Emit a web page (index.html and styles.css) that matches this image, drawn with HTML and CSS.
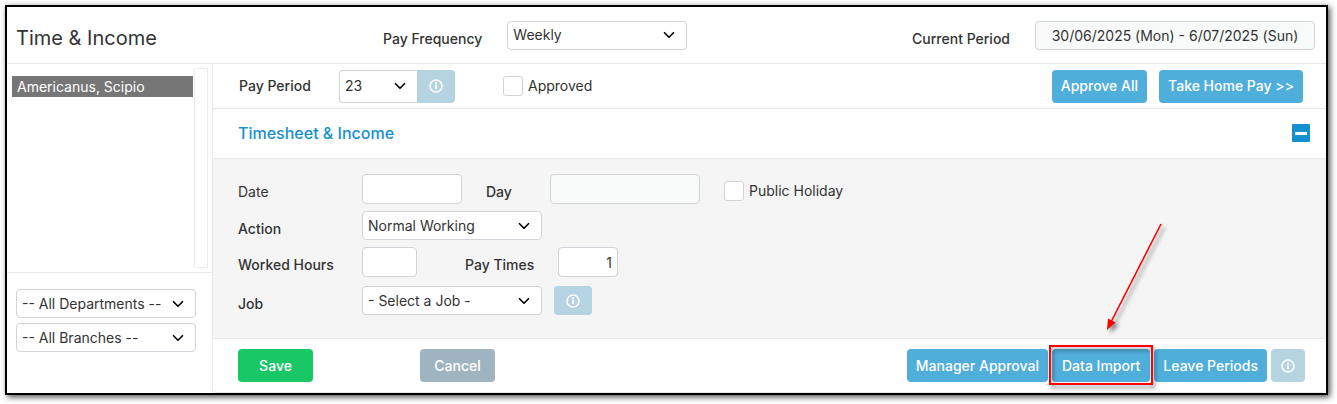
FILE: index.html
```html
<!DOCTYPE html>
<html lang="en">
<head>
    <meta charset="UTF-8">
    <meta name="viewport" content="width=device-width, initial-scale=1.0">
    <title>Time &amp; Income</title>
    <link rel="stylesheet" href="styles.css">
</head>
<body>
    <svg class="sprite" aria-hidden="true">
        <symbol id="info" viewBox="0 0 14 14">
            <circle cx="7" cy="7" r="6" fill="none" stroke="currentColor" stroke-width="1.5"/>
            <path d="M7 6v4M7 3.6v1.6" fill="none" stroke="currentColor" stroke-width="2"/>
        </symbol>
    </svg>
    <div class="frame">
        <header class="header">
            <h1>Time &amp; Income</h1>
            <div class="header-field">
                <label for="frequency">Pay Frequency</label>
                <select id="frequency" class="select">
                    <option>Weekly</option>
                </select>
            </div>
            <div class="header-field header-right">
                <label for="current">Current Period</label>
                <input type="text" id="current" class="input input-period" value="30/06/2025 (Mon) - 6/07/2025 (Sun)" readonly>
            </div>
        </header>
        <div class="body">
            <aside class="sidebar">
                <div class="people">
                    <ul>
                        <li><button type="button" class="person">Americanus, Scipio</button></li>
                    </ul>
                    <div class="track"></div>
                </div>
                <div class="filters">
                    <select class="select" aria-label="Department">
                        <option>-- All Departments --</option>
                    </select>
                    <select class="select" aria-label="Branch">
                        <option>-- All Branches --</option>
                    </select>
                </div>
            </aside>
            <main class="main">
                <div class="toolbar">
                    <label for="period" class="period-label">Pay Period</label>
                    <div class="period-group">
                        <select id="period" class="select">
                            <option>23</option>
                        </select>
                        <button type="button" class="btn btn-info" aria-label="Pay period info"><svg><use href="#info"/></svg></button>
                    </div>
                    <label class="check"><input type="checkbox">Approved</label>
                    <div class="toolbar-actions">
                        <button type="button" class="btn">Approve All</button>
                        <button type="button" class="btn">Take Home Pay &gt;&gt;</button>
                    </div>
                </div>
                <div class="section-title">
                    <h2>Timesheet &amp; Income</h2>
                    <button type="button" class="collapse" aria-label="Collapse"></button>
                </div>
                <form class="form">
                    <div class="row">
                        <label for="date" class="light">Date</label>
                        <input type="text" id="date" class="input input-date">
                        <label for="day" class="label-day">Day</label>
                        <input type="text" id="day" class="input input-day" readonly>
                        <label class="check"><input type="checkbox">Public Holiday</label>
                    </div>
                    <div class="row">
                        <label for="action">Action</label>
                        <select id="action" class="select">
                            <option>Normal Working</option>
                        </select>
                    </div>
                    <div class="row">
                        <label for="hours">Worked Hours</label>
                        <input type="text" id="hours" class="input input-hours">
                        <label for="times" class="label-times">Pay Times</label>
                        <input type="text" id="times" class="input input-times" value="1">
                    </div>
                    <div class="row row-job">
                        <label for="job">Job</label>
                        <select id="job" class="select">
                            <option>- Select a Job -</option>
                        </select>
                        <button type="button" class="btn btn-info" aria-label="Job info"><svg><use href="#info"/></svg></button>
                    </div>
                </form>
                <div class="footer">
                    <button type="button" class="btn btn-save">Save</button>
                    <button type="button" class="btn btn-cancel">Cancel</button>
                    <div class="footer-actions">
                        <button type="button" class="btn">Manager Approval</button>
                        <div class="marked">
                            <button type="button" class="btn">Data Import</button>
                            <span class="marker"></span>
                            <svg class="arrow" viewBox="0 0 64 112" aria-hidden="true">
                                <path d="M56 2L6 100" stroke="#f00" stroke-width="1.6"/>
                                <path d="M2 108L3 96.500L10.500 100.500Z" fill="#f00"/>
                            </svg>
                        </div>
                        <button type="button" class="btn">Leave Periods</button>
                        <button type="button" class="btn btn-info" aria-label="Info"><svg><use href="#info"/></svg></button>
                    </div>
                </div>
            </main>
        </div>
    </div>
</body>
</html>
```
FILE: styles.css
```css
* {
    box-sizing: border-box;
}
body {
    font-family: Inter, "Liberation Sans", sans-serif;
    font-size: 14px;
    line-height: 20px;
    color: #333;
    background-color: #fff;
    margin: 0;
    padding: 5px 9px 9px 5px;
}
h1, h2, ul {
    margin: 0;
    padding: 0;
}
ul {
    list-style: none;
}
label {
    font-weight: 500;
}
button, input, select {
    font: inherit;
    color: inherit;
    margin: 0;
}
.sprite {
    display: none;
}
.frame {
    border: 2px solid #000;
    box-shadow: 2px 2px 6px rgba(0, 0, 0, 0.7);
    background-color: #fff;
}

/* controls */
.input, .select {
    border: 1px solid #ced4da;
    border-radius: 4px;
    background-color: #fff;
    padding: 0 5px;
    outline: none;
}
.input {
    height: 30px;
}
.input:read-only {
    background-color: #f8faf9;
}
.select {
    appearance: none;
    width: 180px;
    height: 29px;
    background-image: url("data:image/svg+xml,%3Csvg xmlns='http://www.w3.org/2000/svg' viewBox='0 0 16 16'%3E%3Cpath fill='none' stroke='%23000' stroke-linecap='round' stroke-linejoin='round' stroke-width='2.2' d='m2 5 6 6 6-6'/%3E%3C/svg%3E");
    background-repeat: no-repeat;
    background-position: right 11px center;
    background-size: 12px 12px;
}
.btn {
    height: 33px;
    padding: 0 9px;
    border: none;
    border-radius: 4px;
    background-color: #50aedb;
    color: #fff;
    font-weight: 500;
    white-space: nowrap;
    cursor: pointer;
}
.btn-info {
    display: flex;
    align-items: center;
    justify-content: center;
    width: 38px;
    background-color: #b5d3e0;
}
.btn-info svg {
    width: 14px;
    height: 14px;
}
.check {
    display: flex;
    align-items: center;
    gap: 5px;
    font-weight: 400;
}
.check input {
    appearance: none;
    width: 20px;
    height: 20px;
    border: 1px solid #ced4da;
    border-radius: 3px;
    background-color: #fff;
}

/* header */
.header {
    display: flex;
    align-items: center;
    height: 57px;
    padding: 0 11px 0 9px;
    border-bottom: 1px solid #e8e8e8;
}
.header h1 {
    width: 367px;
    padding-top: 5px;
    font-size: 20px;
    font-weight: 400;
}
.header-field {
    display: flex;
    align-items: center;
    gap: 25px;
}
.header-field label {
    padding-top: 8px;
}
.header-right {
    margin-left: auto;
}
.input-period {
    width: 280px;
    height: 29px;
    text-align: center;
}

/* sidebar */
.body {
    display: flex;
}
.sidebar {
    width: 206px;
    border-right: 1px solid #e8e8e8;
}
.people {
    display: flex;
    height: 209px;
    padding: 4px 4px 4px 5px;
    border-bottom: 1px solid #e8e8e8;
}
.people ul {
    flex: 1;
    padding-top: 8px;
}
.person {
    display: block;
    width: 100%;
    height: 21px;
    padding: 0 5px;
    border: none;
    background-color: #767676;
    color: #fff;
    text-align: left;
}
.track {
    width: 14px;
    margin-left: 1px;
    border: 1px solid #ececec;
}
.filters {
    display: flex;
    flex-direction: column;
    gap: 5px;
    padding: 16px 9px;
}

/* main */
.main {
    flex: 1;
}
.toolbar {
    display: flex;
    align-items: center;
    height: 45px;
    padding: 0 23px 0 26px;
    border-bottom: 1px solid #e8e8e8;
}
.period-label {
    width: 100px;
}
.period-group {
    display: flex;
    margin-right: 48px;
}
.period-group .select {
    width: 78px;
    height: 33px;
    border-right: none;
    border-radius: 4px 0 0 4px;
}
.period-group .btn-info {
    border-radius: 0 4px 4px 0;
}
.toolbar-actions {
    display: flex;
    gap: 12px;
    margin-left: auto;
}
.section-title {
    display: flex;
    align-items: center;
    justify-content: space-between;
    height: 50px;
    padding: 0 16px 1px 25px;
    border-bottom: 1px solid #e8e8e8;
}
.section-title h2 {
    font-size: 16px;
    font-weight: 500;
    color: #1690cd;
}
.collapse {
    display: flex;
    align-items: center;
    justify-content: center;
    width: 18px;
    height: 18px;
    padding: 0;
    border: none;
    border-radius: 1px;
    background-color: #1690cd;
}
.collapse::before {
    content: "";
    width: 12px;
    height: 3px;
    background-color: #fff;
}
.form {
    display: flex;
    flex-direction: column;
    gap: 7px;
    padding: 15px 25px 23px;
    background-color: #f5f5f5;
    border-bottom: 1px solid #e8e8e8;
}
.row {
    display: flex;
    align-items: center;
}
.row > label:first-child {
    width: 124px;
}
.row > label:not(.check) {
    padding-top: 6px;
}
.row .light {
    font-weight: 400;
}
.row .check {
    margin-left: 24px;
    padding-top: 4px;
}
.row-job {
    padding-top: 2px;
}
.row-job .btn-info {
    height: 29px;
    margin-left: 12px;
}
.input-date {
    width: 100px;
}
.input-day {
    width: 150px;
}
.label-day {
    width: 64px;
    margin-left: 24px;
}
.input-hours {
    width: 55px;
}
.label-times {
    width: 93px;
    margin-left: 48px;
}
.input-times {
    width: 60px;
    text-align: right;
}

/* footer */
.footer {
    display: flex;
    align-items: center;
    height: 54px;
    padding: 0 21px 0 25px;
    border-bottom: 1px solid #e8e8e8;
    border-radius: 0 0 4px 4px;
}
.btn-save {
    width: 75px;
    background-color: #19c767;
}
.btn-cancel {
    width: 75px;
    margin-left: 107px;
    background-color: #9fb3c0;
}
.footer-actions {
    display: flex;
    gap: 4px;
    margin-left: auto;
}
.footer-actions .btn-info {
    width: 34px;
}
.marked {
    position: relative;
}
.marked .btn {
    padding: 0 10px;
}
.marker {
    position: absolute;
    inset: -4px -3px -3px -3px;
    border: 2px solid #f00;
    filter: drop-shadow(2px 3px 2px rgba(0, 0, 0, 0.5));
    pointer-events: none;
}
.arrow {
    position: absolute;
    left: 53px;
    bottom: 48px;
    width: 64px;
    height: 112px;
    overflow: visible;
    filter: drop-shadow(3px 3px 2px rgba(0, 0, 0, 0.5));
    pointer-events: none;
}
```
